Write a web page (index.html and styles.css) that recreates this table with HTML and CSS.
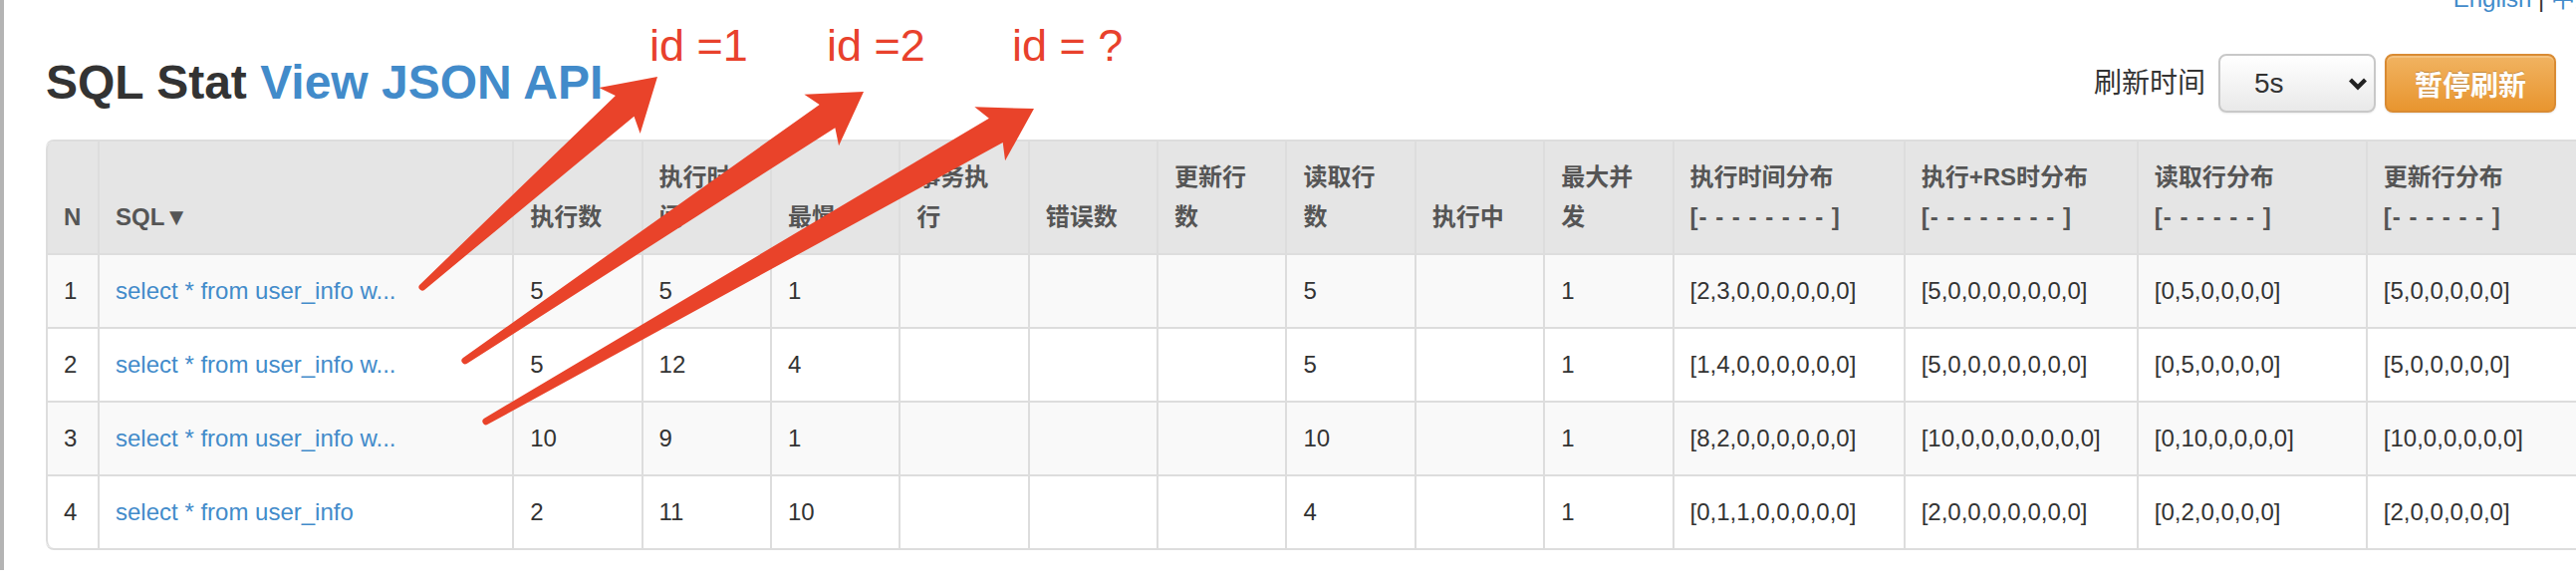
FILE: index.html
```html
<!DOCTYPE html>
<html lang="zh-CN">
<head>
<meta charset="utf-8">
<title>SQL Stat</title>
<link rel="stylesheet" href="styles.css">
</head>
<body>
<div class="page">
  <div class="lang"><a class="link">English</a> | <a class="link">中文</a></div>
  <div class="titlebar">
    <h1 class="title">SQL Stat <a class="link">View JSON API</a></h1>
    <div class="controls">
      <span class="refresh-label">刷新时间</span>
      <div class="select">
        <span class="select-value">5s</span>
        <svg class="chevron" width="20" height="14" viewBox="0 0 20 14"><polyline points="2.5,3 10,10.5 17.5,3" fill="none" stroke="#222" stroke-width="4.2" stroke-linecap="butt" stroke-linejoin="miter"/></svg>
      </div>
      <button class="btn-warning">暂停刷新</button>
    </div>
  </div>
  <table class="grid">
    <thead>
      <tr>
        <th class="c-n">N</th>
        <th class="c-sql">SQL▼</th>
        <th class="c-num">执行数</th>
        <th class="c-num">执行时间</th>
        <th class="c-num">最慢</th>
        <th class="c-num">事务执行</th>
        <th class="c-num">错误数</th>
        <th class="c-num">更新行数</th>
        <th class="c-num">读取行数</th>
        <th class="c-num">执行中</th>
        <th class="c-num">最大并发</th>
        <th class="c-d1">执行时间分布<br><span class="dashes">[-&nbsp;-&nbsp;-&nbsp;-&nbsp;-&nbsp;-&nbsp;-&nbsp;-&nbsp;]</span></th>
        <th class="c-d2">执行+RS时分布<br><span class="dashes">[-&nbsp;-&nbsp;-&nbsp;-&nbsp;-&nbsp;-&nbsp;-&nbsp;-&nbsp;]</span></th>
        <th class="c-d3">读取行分布<br><span class="dashes">[-&nbsp;-&nbsp;-&nbsp;-&nbsp;-&nbsp;-&nbsp;]</span></th>
        <th class="c-d4">更新行分布<br><span class="dashes">[-&nbsp;-&nbsp;-&nbsp;-&nbsp;-&nbsp;-&nbsp;]</span></th>
      </tr>
    </thead>
    <tbody>
      <tr>
        <td>1</td><td><a class="link">select * from user_info w...</a></td>
        <td>5</td><td>5</td><td>1</td><td></td><td></td><td></td><td>5</td><td></td><td>1</td>
        <td>[2,3,0,0,0,0,0,0]</td><td>[5,0,0,0,0,0,0,0]</td><td>[0,5,0,0,0,0]</td><td>[5,0,0,0,0,0]</td>
      </tr>
      <tr>
        <td>2</td><td><a class="link">select * from user_info w...</a></td>
        <td>5</td><td>12</td><td>4</td><td></td><td></td><td></td><td>5</td><td></td><td>1</td>
        <td>[1,4,0,0,0,0,0,0]</td><td>[5,0,0,0,0,0,0,0]</td><td>[0,5,0,0,0,0]</td><td>[5,0,0,0,0,0]</td>
      </tr>
      <tr>
        <td>3</td><td><a class="link">select * from user_info w...</a></td>
        <td>10</td><td>9</td><td>1</td><td></td><td></td><td></td><td>10</td><td></td><td>1</td>
        <td>[8,2,0,0,0,0,0,0]</td><td>[10,0,0,0,0,0,0,0]</td><td>[0,10,0,0,0,0]</td><td>[10,0,0,0,0,0]</td>
      </tr>
      <tr>
        <td>4</td><td><a class="link">select * from user_info</a></td>
        <td>2</td><td>11</td><td>10</td><td></td><td></td><td></td><td>4</td><td></td><td>1</td>
        <td>[0,1,1,0,0,0,0,0]</td><td>[2,0,0,0,0,0,0,0]</td><td>[0,2,0,0,0,0]</td><td>[2,0,0,0,0,0]</td>
      </tr>
    </tbody>
  </table>
</div>

<svg class="annotations" width="2586" height="586" viewBox="0 0 2586 586">
  <g class="note-text">
    <text x="652" y="61">id =1</text>
    <text x="830" y="61">id =2</text>
    <text x="1016" y="61">id = ?</text>
  </g>
  <g class="arrow" transform="translate(660 77) rotate(-41.8)">
    <path d="M0,0 L-51,-31 L-44,-14 L-316.6,-3.5 A3.5,3.5 0 0 0 -316.6,3.5 L-44,14 L-51,31 Z"/>
  </g>
  <g class="arrow" transform="translate(867 92) rotate(-34.0)">
    <path d="M0,0 L-51,-31 L-44,-14 L-482.6,-3.5 A3.5,3.5 0 0 0 -482.6,3.5 L-44,14 L-51,31 Z"/>
  </g>
  <g class="arrow" transform="translate(1038 109) rotate(-29.7)">
    <path d="M0,0 L-51,-31 L-44,-14 L-633.3,-3.5 A3.5,3.5 0 0 0 -633.3,3.5 L-44,14 L-51,31 Z"/>
  </g>
</svg>
</body>
</html>
```

FILE: styles.css
```css
html, body {
  margin: 0;
  padding: 0;
}

body {
  position: relative;
  width: 2586px;
  height: 586px;
  overflow: hidden;
  font-family: "Liberation Sans", "Noto Sans CJK SC", sans-serif;
  font-size: 28px;
  color: #333;
  background:
    linear-gradient(#b4b4b4, #b4b4b4) 0 0 / 4px 572px no-repeat,
    #fff;
}

.page {
  padding: 0 20px 0 46px;
}

.link {
  color: #428bca;
  text-decoration: none;
}

.lang {
  margin: -21px -43px 24px 0;
  height: 40px;
  line-height: 40px;
  font-size: 24px;
  text-align: right;
  white-space: nowrap;
}

.titlebar {
  display: flex;
  justify-content: space-between;
  align-items: center;
  height: 80px;
}

.title {
  margin: 0;
  font-size: 48px;
  line-height: 80px;
  font-weight: bold;
  color: #333;
  white-space: nowrap;
}

.controls {
  display: flex;
  align-items: center;
  margin-top: 1px;
}

.refresh-label {
  font-size: 28px;
  color: #333;
  margin-right: 13px;
  line-height: 40px;
}

.select {
  box-sizing: border-box;
  width: 158px;
  height: 59px;
  border: 2px solid #c8c8c8;
  border-radius: 8px;
  background: linear-gradient(#ffffff, #e9e9e9);
  box-shadow: 0 1px 2px rgba(0, 0, 0, 0.08);
  display: flex;
  align-items: center;
  justify-content: space-between;
  padding: 0 6px 0 34px;
  margin-right: 9px;
}

.select-value {
  font-size: 28px;
  color: #333;
}

.chevron {
  display: block;
}

.btn-warning {
  box-sizing: border-box;
  width: 172px;
  height: 59px;
  border: 2px solid #d98b33;
  border-radius: 8px;
  background: linear-gradient(#f1b361, #e8952f);
  box-shadow: inset 0 2px 0 rgba(255, 255, 255, 0.2), 0 1px 2px rgba(0, 0, 0, 0.1);
  color: #fff;
  font-family: "Liberation Sans", "Noto Sans CJK SC", sans-serif;
  font-size: 28px;
  font-weight: bold;
  text-shadow: 0 -1px 0 rgba(0, 0, 0, 0.2);
  padding: 0;
}

.grid {
  margin-top: 17px;
  table-layout: fixed;
  width: 2561px;
  border-collapse: separate;
  border-spacing: 0;
  border: 2px solid #ddd;
  border-left: 0;
  border-radius: 8px;
  font-size: 24px;
}

.grid th,
.grid td {
  box-sizing: border-box;
  padding: 16px;
  line-height: 40px;
  text-align: left;
  border-left: 2px solid #ddd;
  white-space: normal;
}

.grid th {
  vertical-align: bottom;
  background: #e5e5e5;
  color: #555;
  font-weight: bold;
}

.grid td {
  vertical-align: top;
  border-top: 2px solid #ddd;
  color: #333;
}

.grid tbody tr:nth-child(odd) td {
  background: #f9f9f9;
}

.grid thead tr:first-child th:first-child {
  border-top-left-radius: 8px;
}

.grid tbody tr:last-child td:first-child {
  border-bottom-left-radius: 8px;
}

.dashes {
  letter-spacing: 1px;
}

.c-n { width: 52px; }
.c-sql { width: 416px; }
.c-num { width: 129.33px; }
.c-d1 { width: 232px; }
.c-d2 { width: 234px; }
.c-d3 { width: 230px; }
.c-d4 { width: 230px; }

.annotations {
  position: absolute;
  left: 0;
  top: 0;
  pointer-events: none;
}

.note-text text {
  font-family: "Liberation Sans", sans-serif;
  font-size: 45px;
  fill: #e8412c;
}

.arrow path {
  fill: #e9432a;
}
```
